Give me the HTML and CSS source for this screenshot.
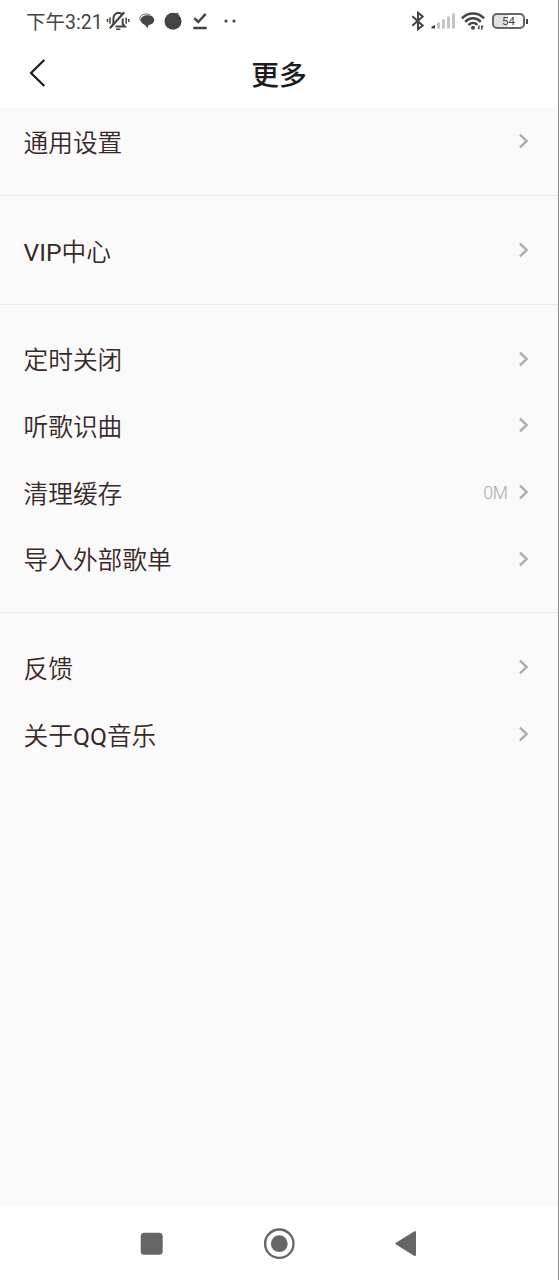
FILE: index.html
```html
<!DOCTYPE html>
<html lang="zh-CN">
<head>
    <meta charset="UTF-8">
    <meta name="viewport" content="width=device-width, initial-scale=1.0">
    <title>更多</title>
    <link rel="stylesheet" href="styles.css">
</head>
<body>
    <svg class="defs">
        <symbol id="chevron" viewBox="0 0 10 16">
            <path d="M1 1.600 7.600 8 1 14.400" fill="none" stroke="#ababab" stroke-width="2.400"/>
        </symbol>
    </svg>

    <div class="phone">
        <div class="status-bar">
            <span class="time">下午3:21</span>
            <svg class="bell" width="24" height="22" viewBox="0 0 24 22" fill="none" stroke="#444" stroke-width="2">
                <path d="M6 16.200 7.400 14V8.700C7.400 5.700 9 3.500 12 2.700c1.900 0 3.400.8 4.300 2M16.700 8.500V14l2.200 2.500H9.500"/>
                <path d="M3.800 18.200 18.300 2.300" stroke-width="2.200"/>
                <path d="M10 19.300h4.400M4 7.500v6.200M1.500 9v3M20.200 7.500v6.200M22.700 9v3" stroke-width="1.500"/>
            </svg>
            <svg class="chat" width="16" height="16" viewBox="0 0 16 16">
                <path d="M1.800 8.200C.3 6.500.5 4 2.300 2.600 4.300.8 8.200.5 10.800 1.500" fill="none" stroke="#666" stroke-width="1"/>
                <path d="M8.500 2.200c3.900 0 6.700 2 6.700 4.900s-2.600 4.700-5.600 4.900L8.400 15.200 6 11.900C3.500 11.200 1.700 9.400 1.700 7.100c0-2.900 3-4.900 6.800-4.900z" fill="#444"/>
            </svg>
            <svg class="dot" width="18" height="18" viewBox="0 0 18 18">
                <circle cx="9" cy="9.200" r="8.500" fill="#444"/>
                <path d="M12 1.200 14.200.5 14.500 3z" fill="#444"/>
            </svg>
            <svg class="done" width="14" height="17" viewBox="0 0 14 17" fill="none" stroke="#444" stroke-width="2.500">
                <path d="M1.300 5.200 5.200 9 12.700.9M.3 15h13.400"/>
            </svg>
            <svg class="more" width="12" height="4" viewBox="0 0 12 4" fill="#444">
                <circle cx="2" cy="2" r="1.600"/>
                <circle cx="10" cy="2" r="1.600"/>
            </svg>

            <div class="status-right">
                <svg width="14" height="20" viewBox="0 0 14 20" fill="none" stroke="#444" stroke-width="2">
                    <path d="M1.300 5.200 11.700 14.500 7 18.300V1.700L11.700 5.500 1.300 14.800"/>
                </svg>
                <svg class="signal" width="25" height="16" viewBox="0 0 25 16" fill="#c4c4c4">
                    <path d="M.5 15.500v-2l3.500-1.500v3.500z" fill="#444"/>
                    <rect x="6" y="9.500" width="3" height="6"/>
                    <rect x="11" y="6.500" width="3" height="9"/>
                    <rect x="16" y="3.500" width="3" height="12"/>
                    <rect x="21" y=".5" width="3" height="15"/>
                </svg>
                <svg class="wifi" width="24" height="18" viewBox="0 0 24 18" fill="none" stroke="#444" stroke-width="2.500">
                    <path d="M1 6.400C7-.1 17-.1 23 6.400M4.200 9.800c4.400-4.600 11.200-4.600 15.600 0M7.400 13c2.700-2.600 6.300-2.700 9-.2"/>
                    <circle cx="12" cy="15.800" r="2" fill="#444" stroke="none"/>
                    <path d="M18 13.300v4M16.800 16h1.500M20.800 17.800v-4.200M20.500 14.500h1.800" stroke-width="1.300"/>
                </svg>
                <div class="battery"><span>54</span></div>
                <div class="battery-tip"></div>
            </div>
        </div>

        <div class="header">
            <svg class="back" width="18" height="30" viewBox="0 0 18 30" fill="none" stroke="#1c1c1c" stroke-width="2.200">
                <path d="M15.300 2 2 15l13.300 13"/>
            </svg>
            <h1>更多</h1>
        </div>

        <div class="content">
            <div class="section">
                <div class="row"><span class="label">通用设置</span><svg class="arrow"><use href="#chevron"/></svg></div>
            </div>
            <div class="section">
                <div class="row"><span class="label"><span class="latin">VIP</span>中心</span><svg class="arrow"><use href="#chevron"/></svg></div>
            </div>
            <div class="section">
                <div class="row"><span class="label">定时关闭</span><svg class="arrow"><use href="#chevron"/></svg></div>
                <div class="row"><span class="label">听歌识曲</span><svg class="arrow"><use href="#chevron"/></svg></div>
                <div class="row"><span class="label">清理缓存</span><span class="size">0M</span><svg class="arrow"><use href="#chevron"/></svg></div>
                <div class="row"><span class="label">导入外部歌单</span><svg class="arrow"><use href="#chevron"/></svg></div>
            </div>
            <div class="section">
                <div class="row"><span class="label">反馈</span><svg class="arrow"><use href="#chevron"/></svg></div>
                <div class="row"><span class="label">关于<span class="latin">QQ</span>音乐</span><svg class="arrow"><use href="#chevron"/></svg></div>
            </div>
        </div>

        <div class="nav-bar">
            <svg width="24" height="24" viewBox="0 0 24 24"><rect x=".7" y=".7" width="22" height="22" rx="3.500" fill="#666"/></svg>
            <svg width="32" height="32" viewBox="0 0 32 32">
                <circle cx="16.300" cy="15.700" r="14.200" fill="none" stroke="#666" stroke-width="2.300"/>
                <circle cx="16.300" cy="15.700" r="8.400" fill="#666"/>
            </svg>
            <svg width="24" height="28" viewBox="0 0 24 28"><path d="M2.500 13.600 21 2.100v23z" fill="#666" stroke="#666" stroke-width="2" stroke-linejoin="round"/></svg>
        </div>
    </div>
</body>
</html>
```
FILE: styles.css
```css
* { box-sizing: border-box; }
body { margin: 0; font-family: Roboto, "Noto Sans CJK SC", sans-serif; background-color: #fff; }
svg { display: block; flex-shrink: 0; }
.defs { display: none; }
.phone { display: flex; flex-direction: column; width: 559px; height: 1280px; border-right: 1px solid #8b8b8b; }

.status-bar { display: flex; align-items: center; height: 42px; padding: 0 30px 0 26px; color: #444; }
.time { width: 80px; padding-top: 3px; font-size: 19.5px; line-height: 24px; white-space: nowrap; }
.chat { margin-left: 9px; }
.dot { margin-left: 9px; }
.done { margin-left: 11px; }
.more { margin-left: 17px; }
.status-right { display: flex; align-items: center; margin-left: auto; }
.signal { margin-left: 6px; }
.wifi { margin-left: 5px; }
.battery { width: 33px; height: 16px; margin-left: 7px; border: 2px solid #666; border-radius: 5px; background: linear-gradient(to right, #e2e2e2 50%, #fff 50%); font-size: 11.5px; line-height: 12px; text-align: center; color: #444; }
.battery-tip { width: 2px; height: 5px; margin-left: 1px; background-color: #444; }

.header { display: grid; grid-template-columns: 48px 1fr 48px; align-items: center; height: 66px; padding-bottom: 4px; }
.back { margin-left: 29px; }
.header h1 { margin: 0; padding-top: 5px; font-size: 27.8px; line-height: 40px; font-weight: 500; text-align: center; color: #1c1c1c; }

.content { flex: 1; background-color: #fafafa; }
.section { padding: 20.5px 0; border-bottom: 1px solid #ebebeb; }
.section:first-child { padding-top: 0; }
.section:last-child { border-bottom: none; }
.row { display: flex; align-items: center; justify-content: space-between; height: 66.65px; padding: 0 29px 0 23.5px; font-size: 24.7px; line-height: 36px; color: #382827; }
.label { padding-top: 5.5px; font-weight: 350; }
.latin { font-weight: 400; }
.size { margin-left: auto; margin-right: 11px; padding-top: 2px; font-size: 17.5px; font-weight: 300; color: #aaa; }
.arrow { width: 10px; height: 16px; }

.nav-bar { display: flex; align-items: center; justify-content: space-between; height: 74px; padding: 1px 140px 0 140px; background-color: #fff; }
```
